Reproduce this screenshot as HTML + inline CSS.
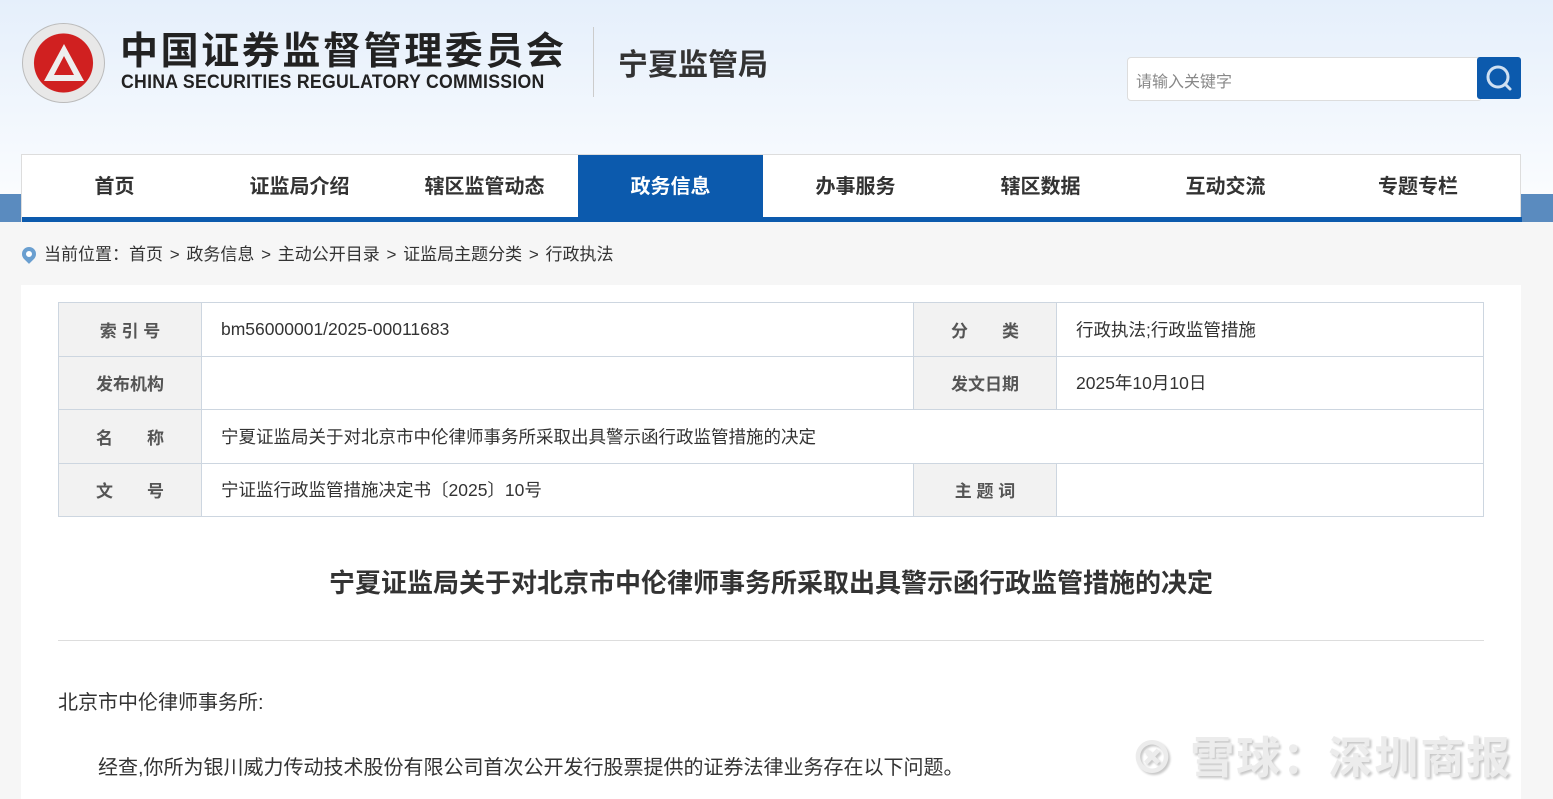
<!DOCTYPE html>
<html><head><meta charset="utf-8"><style>
*{margin:0;padding:0;box-sizing:border-box}
body{width:1553px;height:799px;overflow:hidden;background:#f6f6f6;font-family:"Liberation Sans","Noto Sans CJK SC",sans-serif;color:#333;position:relative}
.hdr{position:absolute;left:0;top:0;width:1553px;height:222px;background:linear-gradient(#e5effb,#fdfeff)}
.band{position:absolute;left:0;top:194px;width:1553px;height:28px;background:#5a8bbf}
.logo{position:absolute;left:22px;top:23px;width:83px;height:80px;border-radius:50%;background:radial-gradient(circle,#d02020 0 52%,#e8e8e8 53% 100%);border:1px solid #bbb}
.logo svg{position:absolute;left:16px;top:15px}
.cn{position:absolute;left:120px;top:30px;font-size:38px;font-weight:bold;color:#222;letter-spacing:2.6px;line-height:44px}
.en{position:absolute;left:121px;top:72px;font-size:19px;color:#222;line-height:22px;letter-spacing:0.3px;font-weight:bold;transform:scaleX(0.93);transform-origin:left}
.vl{position:absolute;left:593px;top:27px;width:1px;height:70px;background:#ccc}
.sub{position:absolute;left:618px;top:47px;font-size:30px;font-weight:bold;color:#333;line-height:38px}
.srch{position:absolute;left:1127px;top:57px;width:355px;height:44px;background:#fff;border:1px solid #ddd;border-radius:4px;font-size:16px;color:#888;padding:10px 8px}
.sbtn{position:absolute;left:1477px;top:57px;width:44px;height:42px;background:#0c5aad;border-radius:3px}
.nav{position:absolute;left:21px;top:154px;width:1500px;height:68px;background:#fff;border:1px solid #ddd;border-bottom:none}
.nav .bl{position:absolute;left:0;bottom:0;width:1500px;height:5px;background:#0c5aad}
.nav span{position:absolute;top:0;height:63px;line-height:64px;font-size:20px;font-weight:bold;color:#333;text-align:center}
.nav .act{background:#0c5aad;color:#fff}
.crumb{position:absolute;left:22px;top:244px;font-size:17px;color:#333;line-height:22px;word-spacing:2px}
.crumb i{display:inline-block;width:14px;height:14px;background:#6a9fd0;border-radius:50% 50% 50% 0;transform:rotate(-45deg);margin-right:8px;vertical-align:-1px;position:relative}
.crumb i:after{content:"";position:absolute;left:4px;top:4px;width:6px;height:6px;border-radius:50%;background:#fff}
.panel{position:absolute;left:21px;top:285px;width:1500px;height:514px;background:#fff}
table{position:absolute;left:37px;top:17px;width:1426px;border-collapse:collapse;font-size:17.5px}
td{border:1px solid #cdd6e0;height:53.5px;padding:0 19px}
td.l{background:#f2f2f2;color:#555;font-weight:bold;text-align:center;width:143px;padding:0;font-size:17px}
.title{position:absolute;left:0;width:1500px;top:278px;text-align:center;font-size:26px;font-weight:bold;color:#333}
.hr{position:absolute;left:37px;top:355px;width:1426px;height:1px;background:#ddd}
.p1{position:absolute;left:37px;top:401px;font-size:20px;color:#333}
.p2{position:absolute;left:77px;top:466px;font-size:20px;color:#333}
.wm{position:absolute;left:1130px;top:722px;font-size:44px;color:#ececec;text-shadow:2px 2px 2px #c8c8c8;letter-spacing:2px;font-weight:bold}
</style></head><body>
<div class="hdr"></div><div class="band"></div>
<div class="logo"><svg width="50" height="50" viewBox="0 0 50 50"><path d="M25 5 L45 42 L5 42 Z M25 17 L35 36 L15 36 Z" fill="#eee" fill-rule="evenodd"/></svg></div>
<div class="cn">中国证券监督管理委员会</div>
<div class="en">CHINA SECURITIES REGULATORY COMMISSION</div>
<div class="vl"></div>
<div class="sub">宁夏监管局</div>
<div class="srch">请输入关键字</div>
<div class="sbtn"><svg width="44" height="42"><circle cx="21" cy="20" r="10" fill="none" stroke="#cfe0f2" stroke-width="3"/><line x1="28" y1="27" x2="33" y2="32" stroke="#cfe0f2" stroke-width="3" stroke-linecap="round"/></svg></div>
<div class="nav">
<span style="left:0;width:185px">首页</span>
<span style="left:185px;width:185px">证监局介绍</span>
<span style="left:370px;width:185px">辖区监管动态</span>
<span class="act" style="left:556px;width:185px">政务信息</span>
<span style="left:741px;width:185px">办事服务</span>
<span style="left:926px;width:185px">辖区数据</span>
<span style="left:1111px;width:185px">互动交流</span>
<span style="left:1296px;width:200px">专题专栏</span>
<div class="bl"></div>
</div>
<div class="crumb"><i></i>当前位置：首页 &gt; 政务信息 &gt; 主动公开目录 &gt; 证监局主题分类 &gt; 行政执法</div>
<div class="panel">
<table>
<tr><td class="l">索 引 号</td><td style="width:712px">bm56000001/2025-00011683</td><td class="l">分　　类</td><td>行政执法;行政监管措施</td></tr>
<tr><td class="l">发布机构</td><td></td><td class="l">发文日期</td><td>2025年10月10日</td></tr>
<tr><td class="l">名　　称</td><td colspan="3">宁夏证监局关于对北京市中伦律师事务所采取出具警示函行政监管措施的决定</td></tr>
<tr><td class="l">文　　号</td><td>宁证监行政监管措施决定书〔2025〕10号</td><td class="l">主 题 词</td><td></td></tr>
</table>
<div class="title">宁夏证监局关于对北京市中伦律师事务所采取出具警示函行政监管措施的决定</div>
<div class="hr"></div>
<div class="p1">北京市中伦律师事务所:</div>
<div class="p2">经查,你所为银川威力传动技术股份有限公司首次公开发行股票提供的证券法律业务存在以下问题。</div>
</div>
<div class="wm">⊗ 雪球：深圳商报</div>
</body></html>
